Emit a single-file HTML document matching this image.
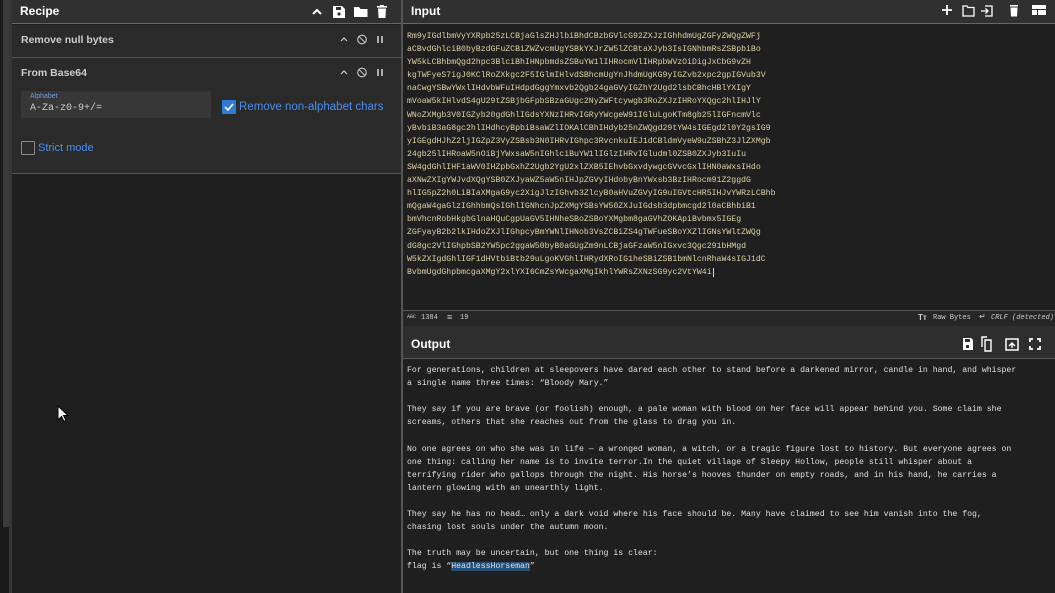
<!DOCTYPE html>
<html><head><meta charset="utf-8"><style>
*{margin:0;padding:0;box-sizing:border-box}
body{width:1055px;height:593px;overflow:hidden;background:#1f1f1f;font-family:"Liberation Sans",sans-serif;position:relative;color:#ddd}
.abs{position:absolute}
.hdr{background:#303030;color:#fff;font-weight:bold;font-size:12px}
.mono{font-family:"Liberation Mono",monospace}
.ic{position:absolute;fill:#fff}
.op{background:#2a2a2a;border-bottom:1px solid #555}
.optitle{position:absolute;left:9px;font-size:10.5px;font-weight:bold;color:#ccc}
.inp{position:absolute;left:407px;top:30px;font-size:8.2px;line-height:13.1px;color:#ddd3a6;white-space:pre}
.out{position:absolute;left:407px;top:364px;font-size:8.2px;line-height:13.1px;color:#e0e0e0;white-space:pre}
</style></head><body>
<!-- left strip -->
<div class="abs" style="left:0;top:0;width:3px;height:593px;background:#1a1a1a"></div>
<div class="abs" style="left:3px;top:0;width:6px;height:527px;background:#3b3b3b"></div>
<div class="abs" style="left:3px;top:527px;width:6px;height:66px;background:#1a1a1a"></div>
<div class="abs" style="left:9px;top:0;width:3px;height:593px;background:#363636"></div>

<!-- recipe -->
<div class="abs hdr" style="left:12px;top:0;width:389px;height:24px;border-bottom:1px solid #666"><span style="position:absolute;left:8px;top:4px">Recipe</span></div>
<svg class="ic" style="left:311px;top:4px" width="86" height="15" viewBox="0 0 86 15">
<path d="M2 10 L6 6 L10 10" stroke="#fff" stroke-width="2" fill="none"/>
<path d="M22 2h9l3 3v9h-12z" /><rect x="25" y="3" width="5" height="3" fill="#303030"/><circle cx="28" cy="10" r="1.6" fill="#303030"/>
<path d="M43 3h5l1.5 2h7v8h-13.5z"/>
<rect x="66" y="2" width="10" height="1.6"/><rect x="69" y="1" width="4" height="1.5"/><path d="M67 4.5h8l-0.6 9.5h-6.8z"/>
</svg>
<div class="abs op" style="left:12px;top:25px;width:389px;height:33px"><span class="optitle" style="top:9px">Remove null bytes</span></div>
<div class="abs op" style="left:12px;top:58px;width:389px;height:116px"><span class="optitle" style="top:9px">From Base64</span>
<div class="abs" style="left:9px;top:33px;width:190px;height:27px;background:#373737;border-radius:2px">
<span style="position:absolute;left:9px;top:2px;font-size:7px;color:#6a9de0">Alphabet</span>
<span class="mono" style="position:absolute;left:9px;top:12px;font-size:10px;color:#ccc">A-Za-z0-9+/=</span></div>
<div class="abs" style="left:210px;top:42px;width:14px;height:14px;background:#2f7ad6;border-radius:1px"><svg width="14" height="14"><path d="M3 7l3 3 5-6" stroke="#fff" stroke-width="1.6" fill="none"/></svg></div>
<span class="abs" style="left:227px;top:43px;font-size:11.5px;color:#4a8fee">Remove non-alphabet chars</span>
<div class="abs" style="left:9px;top:83px;width:14px;height:14px;border:1px solid #888;border-radius:1px"></div>
<span class="abs" style="left:26px;top:84px;font-size:11px;color:#4a8fee">Strict mode</span>
</div>
<svg class="abs" style="left:339px;top:33px" width="50" height="120" viewBox="0 0 50 120" fill="none" stroke="#ccc">
<path d="M2 8l3-3 3 3" stroke-width="1.2"/><circle cx="23" cy="6.5" r="4.3" stroke-width="1.1"/><path d="M20 3.5l6 6"/><path d="M39 3v7M43 3v7" stroke-width="1.6"/>
<path d="M2 41l3-3 3 3" stroke-width="1.2"/><circle cx="23" cy="39.5" r="4.3" stroke-width="1.1"/><path d="M20 36.5l6 6"/><path d="M39 36v7M43 36v7" stroke-width="1.6"/>
</svg>

<!-- divider -->
<div class="abs" style="left:401px;top:0;width:2px;height:593px;background:#555"></div>

<!-- input -->
<div class="abs hdr" style="left:403px;top:0;width:652px;height:24px;border-bottom:1px solid #666"><span style="position:absolute;left:8px;top:4px">Input</span></div>
<svg class="ic" style="left:940px;top:3px" width="110" height="15" viewBox="0 0 110 15">
<path d="M7 2v10M2 7h10" stroke="#fff" stroke-width="1.8"/>
<path d="M23 3h4l1 1.5h6v8.5h-11z" fill="none" stroke="#fff" stroke-width="1.3"/>
<path d="M45 3h7v10h-7M41 8h7M45.5 5.5l2.5 2.5-2.5 2.5" fill="none" stroke="#fff" stroke-width="1.3"/>
<rect x="70" y="2" width="8" height="1.5"/><path d="M70.5 4.5h7l-0.5 9h-6z"/>
<rect x="92" y="2" width="14" height="4"/><rect x="92" y="7" width="14" height="5"/><rect x="97" y="7" width="1" height="5" fill="#303030"/>
</svg>
<div class="inp mono">Rm9yIGdlbmVyYXRpb25zLCBjaGlsZHJlbiBhdCBzbGVlcG92ZXJzIGhhdmUgZGFyZWQgZWFj
aCBvdGhlciB0byBzdGFuZCBiZWZvcmUgYSBkYXJrZW5lZCBtaXJyb3IsIGNhbmRsZSBpbiBo
YW5kLCBhbmQgd2hpc3BlciBhIHNpbmdsZSBuYW1lIHRocmVlIHRpbWVzOiDigJxCbG9vZH
kgTWFyeS7igJ0KClRoZXkgc2F5IGlmIHlvdSBhcmUgYnJhdmUgKG9yIGZvb2xpc2gpIGVub3V
naCwgYSBwYWxlIHdvbWFuIHdpdGggYmxvb2Qgb24gaGVyIGZhY2Ugd2lsbCBhcHBlYXIgY
mVoaW5kIHlvdS4gU29tZSBjbGFpbSBzaGUgc2NyZWFtcywgb3RoZXJzIHRoYXQgc2hlIHJlY
WNoZXMgb3V0IGZyb20gdGhlIGdsYXNzIHRvIGRyYWcgeW91IGluLgoKTm8gb25lIGFncmVlc
yBvbiB3aG8gc2hlIHdhcyBpbiBsaWZlIOKAlCBhIHdyb25nZWQgd29tYW4sIGEgd2l0Y2gsIG9
yIGEgdHJhZ2ljIGZpZ3VyZSBsb3N0IHRvIGhpc3RvcnkuIEJ1dCBldmVyeW9uZSBhZ3JlZXMgb
24gb25lIHRoaW5nOiBjYWxsaW5nIGhlciBuYW1lIGlzIHRvIGludml0ZSB0ZXJyb3IuIu
SW4gdGhlIHF1aWV0IHZpbGxhZ2Ugb2YgU2xlZXB5IEhvbGxvdywgcGVvcGxlIHN0aWxsIHdo
aXNwZXIgYWJvdXQgYSB0ZXJyaWZ5aW5nIHJpZGVyIHdobyBnYWxsb3BzIHRocm91Z2ggdG
hlIG5pZ2h0LiBIaXMgaG9yc2XigJlzIGhvb3ZlcyB0aHVuZGVyIG9uIGVtcHR5IHJvYWRzLCBhb
mQgaW4gaGlzIGhhbmQsIGhlIGNhcnJpZXMgYSBsYW50ZXJuIGdsb3dpbmcgd2l0aCBhbiB1
bmVhcnRobHkgbGlnaHQuCgpUaGV5IHNheSBoZSBoYXMgbm8gaGVhZOKApiBvbmx5IGEg
ZGFyayB2b2lkIHdoZXJlIGhpcyBmYWNlIHNob3VsZCBiZS4gTWFueSBoYXZlIGNsYWltZWQg
dG8gc2VlIGhpbSB2YW5pc2ggaW50byB0aGUgZm9nLCBjaGFzaW5nIGxvc3Qgc291bHMgd
W5kZXIgdGhlIGF1dHVtbiBtb29uLgoKVGhlIHRydXRoIG1heSBiZSB1bmNlcnRhaW4sIGJ1dC
BvbmUgdGhpbmcgaXMgY2xlYXI6CmZsYWcgaXMgIkhlYWRsZXNzSG9yc2VtYW4i<span style="border-left:1px solid #ddd;margin-left:1px"></span></div>

<!-- status bar -->
<div class="abs" style="left:403px;top:310px;width:652px;height:1px;background:#555"></div>
<div class="abs" style="left:403px;top:311px;width:652px;height:15px;background:#262626;font-size:7px;color:#ccc">
<span class="mono" style="position:absolute;left:4px;top:3px;font-size:5px">ABC</span><span class="mono" style="position:absolute;left:18px;top:3px">1384</span>
<span style="position:absolute;left:44px;top:1px;font-size:9px">&#8801;</span><span class="mono" style="position:absolute;left:57px;top:3px">19</span>
<span style="position:absolute;left:515px;top:2px;font-weight:bold;font-size:8px">Tт</span><span class="mono" style="position:absolute;left:530px;top:3px">Raw Bytes</span>
<span style="position:absolute;left:576px;top:1px;font-size:8px">&#8629;</span><span class="mono" style="position:absolute;left:588px;top:3px;font-style:italic">CRLF (detected)</span>
</div>
<!-- output header -->
<div class="abs hdr" style="left:403px;top:326px;width:652px;height:33px;background:#2e2e2e;border-bottom:1px solid #555"><span style="position:absolute;left:8px;top:11px">Output</span></div>
<svg class="ic" style="left:960px;top:336px" width="85" height="16" viewBox="0 0 85 16">
<path d="M3 2h8l2 2v10H3z"/><rect x="5" y="3" width="5" height="3" fill="#2e2e2e"/><rect x="6" y="9" width="3" height="3" fill="#2e2e2e"/>
<path d="M27 1h-5v10M25 4h6v11h-6z" fill="none" stroke="#fff" stroke-width="1.4"/>
<rect x="46" y="3" width="12" height="11" fill="none" stroke="#fff" stroke-width="1.5"/><path d="M49 10l3-3 3 3M52 7v5" stroke="#fff" stroke-width="1.4" fill="none"/>
<path d="M70 6V3h3M77 3h3v3M80 10v3h-3M73 13h-3v-3" fill="none" stroke="#fff" stroke-width="1.8"/>
</svg>

<div class="out mono">For generations, children at sleepovers have dared each other to stand before a darkened mirror, candle in hand, and whisper
a single name three times: “Bloody Mary.”

They say if you are brave (or foolish) enough, a pale woman with blood on her face will appear behind you. Some claim she
screams, others that she reaches out from the glass to drag you in.

No one agrees on who she was in life — a wronged woman, a witch, or a tragic figure lost to history. But everyone agrees on
one thing: calling her name is to invite terror.In the quiet village of Sleepy Hollow, people still whisper about a
terrifying rider who gallops through the night. His horse’s hooves thunder on empty roads, and in his hand, he carries a
lantern glowing with an unearthly light.

They say he has no head… only a dark void where his face should be. Many have claimed to see him vanish into the fog,
chasing lost souls under the autumn moon.

The truth may be uncertain, but one thing is clear:
flag is “<span style="background:#264f78">HeadlessHorseman</span>”</div>

<!-- cursor -->
<svg class="abs" style="left:57px;top:405px" width="12" height="18" viewBox="0 0 12 18"><path d="M1 1v14l3.5-3.5 2.5 5 2-1-2.5-5H11z" fill="#fff" stroke="#000" stroke-width="1"/></svg>
</body></html>
